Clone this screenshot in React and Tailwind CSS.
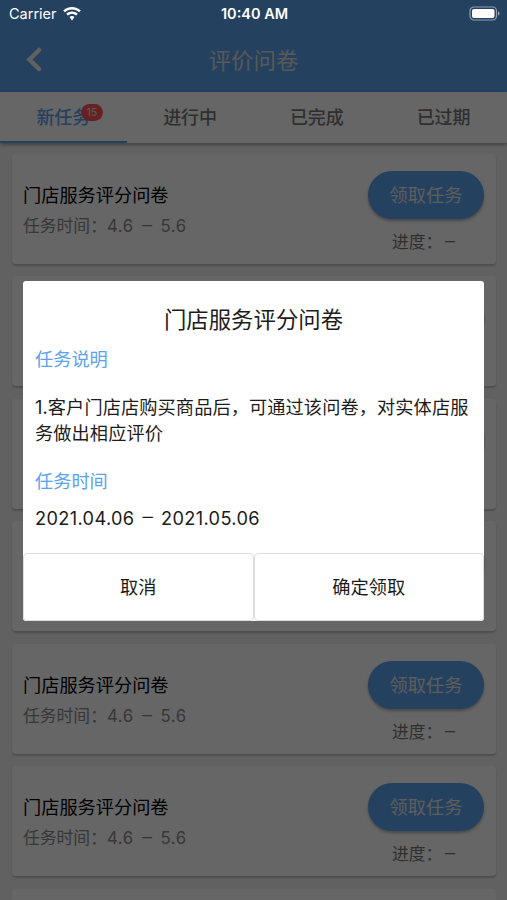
const tabs = ["新任务", "进行中", "已完成", "已过期"];
const tasks = [1, 2, 3, 4, 5, 6];

function StatusBar() {
  return (
    <div className="relative z-20 flex h-[27px] items-center justify-between pl-[9px] pr-[7px] text-white">
      <div className="flex w-[120px] items-center gap-[6px]">
        <span className="text-[14.5px] leading-[27px]">Carrier</span>
        <svg width="18" height="14" viewBox="0 0 18 14" fill="currentColor">
          <path d="M9 0C5.600 0 2.400 1.300 0.200 3.500L1.900 5.300C3.800 3.500 6.300 2.500 9 2.500s5.200 1 7.100 2.800l1.700-1.800C15.400 1.300 12.400 0 9 0z" />
          <path d="M9 4.500c-2.200 0-4.200.8-5.800 2.200l1.700 1.800C6 7.500 7.400 6.900 9 6.900s3 .6 4.100 1.600l1.700-1.800C13.200 5.300 11.200 4.500 9 4.500z" />
          <path d="M9 9c-1 0-1.900.4-2.600 1L9 13.500 11.600 10C10.900 9.400 10 9 9 9z" />
        </svg>
      </div>
      <span className="text-[14.5px] font-semibold leading-[27px]">10:40 AM</span>
      <div className="flex w-[120px] justify-end">
        <svg width="31" height="15" viewBox="0 0 31 15" fill="none">
          <rect x="1" y="1" width="26.500" height="13" rx="4" stroke="white" strokeOpacity="0.5" strokeWidth="1.2" />
          <rect x="3" y="3" width="22.500" height="9" rx="2" fill="white" />
          <path d="M29 5.500v4c1-.3 1.600-1 1.600-2s-.6-1.700-1.600-2z" fill="white" fillOpacity="0.5" />
        </svg>
      </div>
    </div>
  );
}

function TaskCard() {
  return (
    <div className="flex h-[110px] shrink-0 justify-between rounded-[4px] bg-white pl-[11px] pr-[12px] shadow-[0_2px_2px_rgba(0,0,0,0.2)]">
      <div className="pt-[27px]">
        <h3 className="text-[18.2px] leading-[28px] text-black">门店服务评分问卷</h3>
        <p className="flex pt-[4px] text-[16.8px] leading-[26px] text-[#8a8a8a]">
          <span className="w-[84px]">任务时间：</span>
          <span className="tracking-[0.5px]">4.6</span>
          <span className="mx-[8.5px] text-[20px] font-light leading-[24px]">–</span>
          <span className="tracking-[0.5px]">5.6</span>
        </p>
      </div>
      <div className="w-[116px] pt-[17px]">
        <button className="h-[48px] w-full rounded-full bg-[#5aa2ed] pt-[2px] text-[18.2px] text-[#e8e8e8] shadow-[0_2px_3px_rgba(0,0,0,0.3)]">
          领取任务
        </button>
        <p className="flex pl-[24px] pt-[10px] text-[16.8px] leading-[26px] text-[#777]">
          <span className="w-[53px]">进度：</span>
          <span className="text-[20px] font-light leading-[24px]">–</span>
        </p>
      </div>
    </div>
  );
}

export default function App() {
  return (
    <div className="relative h-[900px] w-[507px] overflow-hidden bg-[#f3f3f3] font-['Inter','Noto_Sans_CJK_SC',sans-serif]">
      {/* HEADER */}
      <header className="h-[92px] bg-[#5aa2ed]">
        <StatusBar />
        <div className="flex h-[65px] items-center px-[25px] text-[#f0f0f0]">
          <svg width="60" height="26" viewBox="0 0 60 26" fill="none" stroke="currentColor" strokeWidth="4.5" strokeLinecap="round">
            <path d="M14 3L4.500 12.500l9.500 9.500" />
          </svg>
          <h1 className="flex-1 pt-[2px] text-center text-[22.4px] text-[#ddd]">评价问卷</h1>
          <div className="w-[60px]" />
        </div>
      </header>

      {/* TABS */}
      <nav className="flex h-[51px] bg-white shadow-[0_2px_3px_rgba(0,0,0,0.3)]">
        {tabs.map((tab, i) => (
          <div
            key={tab}
            className={`relative flex flex-1 items-center justify-center text-[18px] font-medium ${
              i === 0 ? "text-[#5aa2ed]" : "text-[#777]"
            }`}
          >
            {tab}
            {i === 0 && (
              <>
                <span className="absolute left-[81px] top-[12px] h-[17px] w-[22px] rounded-full bg-[#f55] text-center text-[10px] leading-[17px] text-[#ddd]">
                  15
                </span>
                <span className="absolute bottom-0 left-0 h-[2.5px] w-full bg-[#5aa2ed]" />
              </>
            )}
          </div>
        ))}
      </nav>

      {/* TASK LIST */}
      <main className="flex flex-col gap-[12.5px] pl-[12px] pr-[11px] pt-[10.5px]">
        {tasks.map((id) => (
          <TaskCard key={id} />
        ))}
        <div className="h-[110px] shrink-0 rounded-[4px] bg-white" />
      </main>

      {/* CONFIRM DIALOG */}
      <div className="absolute inset-0 z-10 flex items-center justify-center bg-black/60">
        <div className="mt-px flex h-[340px] w-[461px] flex-col rounded-[3px] bg-white text-[18.2px] text-[#1c1c1c]">
          <h2 className="pt-[22px] text-center text-[22.4px] leading-[34px]">门店服务评分问卷</h2>
          <div className="flex-1 px-[12px] pt-[9px]">
            <h3 className="leading-[26px] text-[#5aa2ed]">任务说明</h3>
            <p className="whitespace-nowrap pt-[22px] leading-[26px] tracking-[0.1px]">
              1.客户门店店购买商品后，可通过该问卷，对实体店服
              <br />
              务做出相应评价
            </p>
            <h3 className="pt-[22px] leading-[26px] text-[#5aa2ed]">任务时间</h3>
            <p className="flex pt-[11px] leading-[26px]">
              <span className="tracking-[0.35px]">2021.04.06</span>
              <span className="mx-[8px] text-[21px] font-light leading-[24px]">–</span>
              <span className="tracking-[0.35px]">2021.05.06</span>
            </p>
          </div>
          <div className="flex h-[68px]">
            <button className="flex-1 rounded-[4px] border border-[#ddd] pt-[2px]">取消</button>
            <button className="flex-1 rounded-[4px] border border-[#ddd] pt-[2px]">确定领取</button>
          </div>
        </div>
      </div>
    </div>
  );
}
